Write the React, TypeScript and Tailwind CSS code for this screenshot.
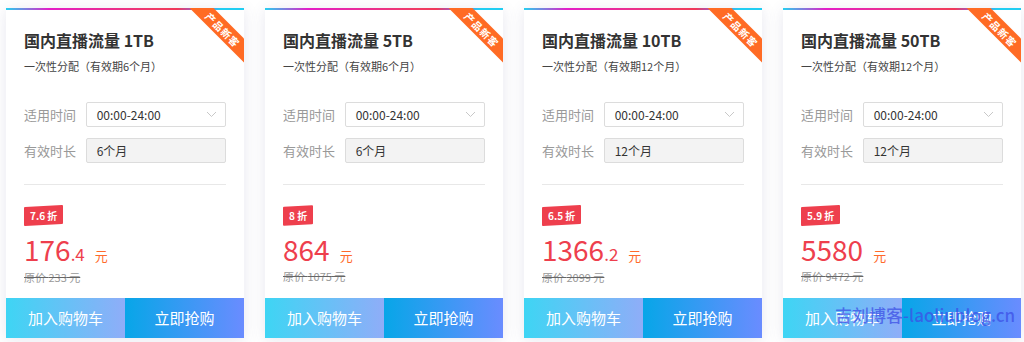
import React from 'react';

interface Plan {
  size: string;
  months: string;
  discount: string;
  price: string;
  decimal?: string;
  original: string;
}

const plans: Plan[] = [
  { size: '1TB', months: '6个月', discount: '7.6 折', price: '176', decimal: '.4', original: '233' },
  { size: '5TB', months: '6个月', discount: '8 折', price: '864', original: '1075' },
  { size: '10TB', months: '12个月', discount: '6.5 折', price: '1366', decimal: '.2', original: '2099' },
  { size: '50TB', months: '12个月', discount: '5.9 折', price: '5580', original: '9472' },
];

const PlanCard: React.FC<{ plan: Plan }> = ({ plan }) => {
  return (
    <div className="relative flex h-[330px] w-[238px] flex-col bg-white shadow-[0_2px_14px_rgba(70,70,130,0.13)]">
      {/* top gradient bar */}
      <div className="h-[2px] w-full bg-[linear-gradient(90deg,#26d0f0_0%,#e41dc8_18%,#f03b62_65%,#f0385a_72%,#7d6bf0_82%,#20cdf2_90%)]" />

      {/* corner ribbon */}
      <div className="absolute right-0 top-0 h-[62px] w-[62px] overflow-hidden">
        <div className="absolute left-[-5px] top-[13px] flex h-[17px] w-[92px] rotate-45 items-center justify-center bg-[#ff6b24] text-[10px] font-bold tracking-[1px] text-white">
          产品新客
        </div>
      </div>

      <div className="flex flex-1 flex-col px-[18px]">
        <h3 className="mt-[20px] text-[16px] font-bold leading-[20px] text-[#333]">
          国内直播流量 {plan.size}
        </h3>
        <p className="mt-[9px] text-[11px] leading-[14px] text-[#444]">
          一次性分配（有效期{plan.months}）
        </p>

        <div className="mt-[29px] flex items-center">
          <span className="w-[62px] text-[13px] text-[#999]">适用时间</span>
          <div className="flex h-[25px] w-[141px] items-center justify-between rounded-[2px] border border-[#dcdcdc] bg-white pl-[10px] pr-[8px] text-[12px] text-[#333]">
            <span>00:00-24:00</span>
            <svg width="11" height="7" viewBox="0 0 11 7" fill="none">
              <path d="M1 1l4.5 4.5L10 1" stroke="#c8c8c8" strokeWidth="1" />
            </svg>
          </div>
        </div>
        <div className="mt-[11px] flex items-center">
          <span className="w-[62px] text-[13px] text-[#999]">有效时长</span>
          <div className="flex h-[25px] w-[141px] items-center rounded-[2px] border border-[#dcdcdc] bg-[#f3f3f3] pl-[10px] text-[12px] text-[#333]">
            {plan.months}
          </div>
        </div>

        <div className="mt-[21px] h-px w-[202px] bg-[#e8e8e8]" />

        <div className="mt-[21px] flex">
          <span className="relative inline-flex h-[19px] items-center px-[6px] text-[10px] font-bold text-white">
            <span className="absolute inset-0 -skew-y-3 rounded-[1px] bg-[#ee3f4d]" />
            <span className="relative">{plan.discount}</span>
          </span>
        </div>

        <div className="mt-[10px] flex items-baseline text-[#ee3f4d]">
          <span className="text-[28px] leading-[28px]">{plan.price}</span>
          {plan.decimal && <span className="text-[17px]">{plan.decimal}</span>}
          <span className="ml-[10px] text-[13px] text-[#ff6a2b]">元</span>
        </div>
        <p className="mt-[3px] text-[11px] leading-[14px] text-[#999] line-through decoration-[#666]">
          原价 {plan.original} 元
        </p>
      </div>

      <div className="flex h-[40px]">
        <button className="flex-1 bg-[linear-gradient(90deg,#3ed5f4,#8fadf8)] text-[15px] text-white">
          加入购物车
        </button>
        <button className="flex-1 bg-[linear-gradient(90deg,#07a6e8,#6a8cff)] text-[15px] text-white">
          立即抢购
        </button>
      </div>
    </div>
  );
};

export default function App() {
  return (
    <div
      className="relative h-[342px] w-[1024px] overflow-hidden bg-white"
      style={{ fontFamily: '"Noto Sans CJK SC", "Open Sans", sans-serif' }}
    >
      <div className="flex gap-[21px] pl-[6px] pt-[8px]">
        {plans.map((p) => (
          <PlanCard key={p.size} plan={p} />
        ))}
      </div>
      <span className="absolute left-[835px] top-[302px] whitespace-nowrap text-[17px] font-medium text-[#3d50e6]/75">
        吉刘博客-laoliublog.cn
      </span>
    </div>
  );
}
